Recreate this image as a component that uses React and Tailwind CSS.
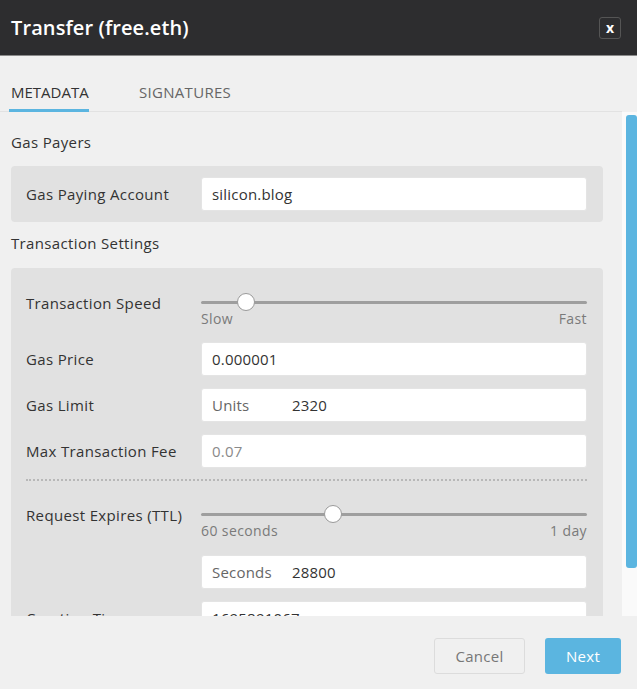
import React from "react";

const Slider = ({ pos, left, right }) => (
  <div className="flex-1">
    <div className="relative h-[18px] flex items-center">
      <div className="h-[3px] w-full bg-[#9e9e9e] rounded" />
      <div
        className="absolute top-0 w-[18px] h-[18px] rounded-full bg-white border border-[#9a9a9a]"
        style={{ left: pos }}
      />
    </div>
    <div className="flex justify-between text-[14px] tracking-[0.4px] leading-4 text-[#7a7a7a]">
      <span>{left}</span>
      <span>{right}</span>
    </div>
  </div>
);

const Field = ({ prefix, value, muted }) => (
  <div className="flex-1 h-[34px] bg-white rounded-[3px] border border-[#e4e4e4] flex items-center pl-[10px] text-[15px] tracking-[0.2px]">
    {prefix && <span className="w-[80px] text-[#666]">{prefix}</span>}
    <span className={muted ? "text-[#8a8a8a]" : "text-[#333]"}>{value}</span>
  </div>
);

const Row = ({ label, children, top }) => (
  <div className={`flex ${top ? "items-start" : "items-center"}`}>
    <div className="w-[175px] shrink-0 text-[15px] tracking-[0.35px] leading-5 text-[#333] whitespace-nowrap">
      {label}
    </div>
    {children}
  </div>
);

export default function App() {
  return (
    <div
      className="w-[637px] h-[689px] flex flex-col bg-[#f0f0f0] overflow-hidden"
      style={{ fontFamily: '"Open Sans", "Liberation Sans", sans-serif' }}
    >
      {/* header */}
      <div className="h-[56px] shrink-0 bg-[#2d2d2f] border-b border-[#8a8a8a] flex items-center justify-between pl-[11px] pr-[16px]">
        <h1 className="text-[20px] font-semibold text-white tracking-[0.1px]">Transfer (free.eth)</h1>
        <button className="w-[22px] h-[22px] rounded-[3px] border border-[#555] text-white text-[14px] font-bold leading-none flex items-center justify-center">
          x
        </button>
      </div>

      {/* tabs */}
      <div className="h-[56px] shrink-0 flex items-end w-[622px] border-b border-[#e2e2e2]">
        <div className="ml-[9px] px-[2px] w-[80px] border-b-[3px] border-[#5bb5e0] pb-[6px] text-[15px] text-[#333] -mb-px">
          METADATA
        </div>
        <div className="ml-[50px] pb-[8px] text-[15px] tracking-[0.3px] text-[#666]">SIGNATURES</div>
      </div>

      {/* scroll area */}
      <div className="h-[504px] shrink-0 flex">
        <div className="w-[622px] overflow-hidden pl-[11px] pr-[19px]">
          <div className="mt-[20px] text-[15px] tracking-[0.35px] leading-5 text-[#333]">Gas Payers</div>
          <div className="mt-[14px] bg-[#e1e1e1] rounded-[4px] pl-[15px] pr-[16px] py-[11px]">
            <Row label="Gas Paying Account">
              <Field value="silicon.blog" />
            </Row>
          </div>

          <div className="mt-[11px] text-[15px] tracking-[0.35px] leading-5 text-[#333]">Transaction Settings</div>
          <div className="mt-[15px] bg-[#e1e1e1] rounded-[4px] pl-[15px] pr-[16px] pt-[25px] pb-[20px]">
            <Row label="Transaction Speed" top>
              <Slider pos={36} left="Slow" right="Fast" />
            </Row>
            <div className="mt-[15px] flex flex-col gap-[12px]">
              <Row label="Gas Price">
                <Field value="0.000001" />
              </Row>
              <Row label="Gas Limit">
                <Field prefix="Units" value="2320" />
              </Row>
              <Row label="Max Transaction Fee">
                <Field value="0.07" muted />
              </Row>
            </div>
            <div className="mt-[11px] border-t-2 border-dotted border-[#b8b8b8]" />
            <div className="mt-[24px]">
              <Row label="Request Expires (TTL)" top>
                <Slider pos={123} left="60 seconds" right="1 day" />
              </Row>
            </div>
            <div className="mt-[16px] flex flex-col gap-[12px]">
              <Row label="">
                <Field prefix="Seconds" value="28800" />
              </Row>
              <Row label="Creation Time">
                <Field value="1695891067" />
              </Row>
            </div>
          </div>
        </div>
        <div className="w-[15px] bg-[#fafafa] pl-[4px] pt-[3px]">
          <div className="w-[11px] h-[453px] bg-[#5bb5e0] rounded-[3px]" />
        </div>
      </div>

      {/* footer */}
      <div className="flex-1 flex items-start justify-end gap-[20px] pr-[16px] pt-[22px]">
        <button className="w-[91px] h-[36px] rounded-[3px] border border-[#dcdcdc] text-[15px] tracking-[0.3px] text-[#777]">
          Cancel
        </button>
        <button className="w-[76px] h-[36px] rounded-[3px] bg-[#5bb5e0] text-[15px] tracking-[0.3px] text-white">
          Next
        </button>
      </div>
    </div>
  );
}
